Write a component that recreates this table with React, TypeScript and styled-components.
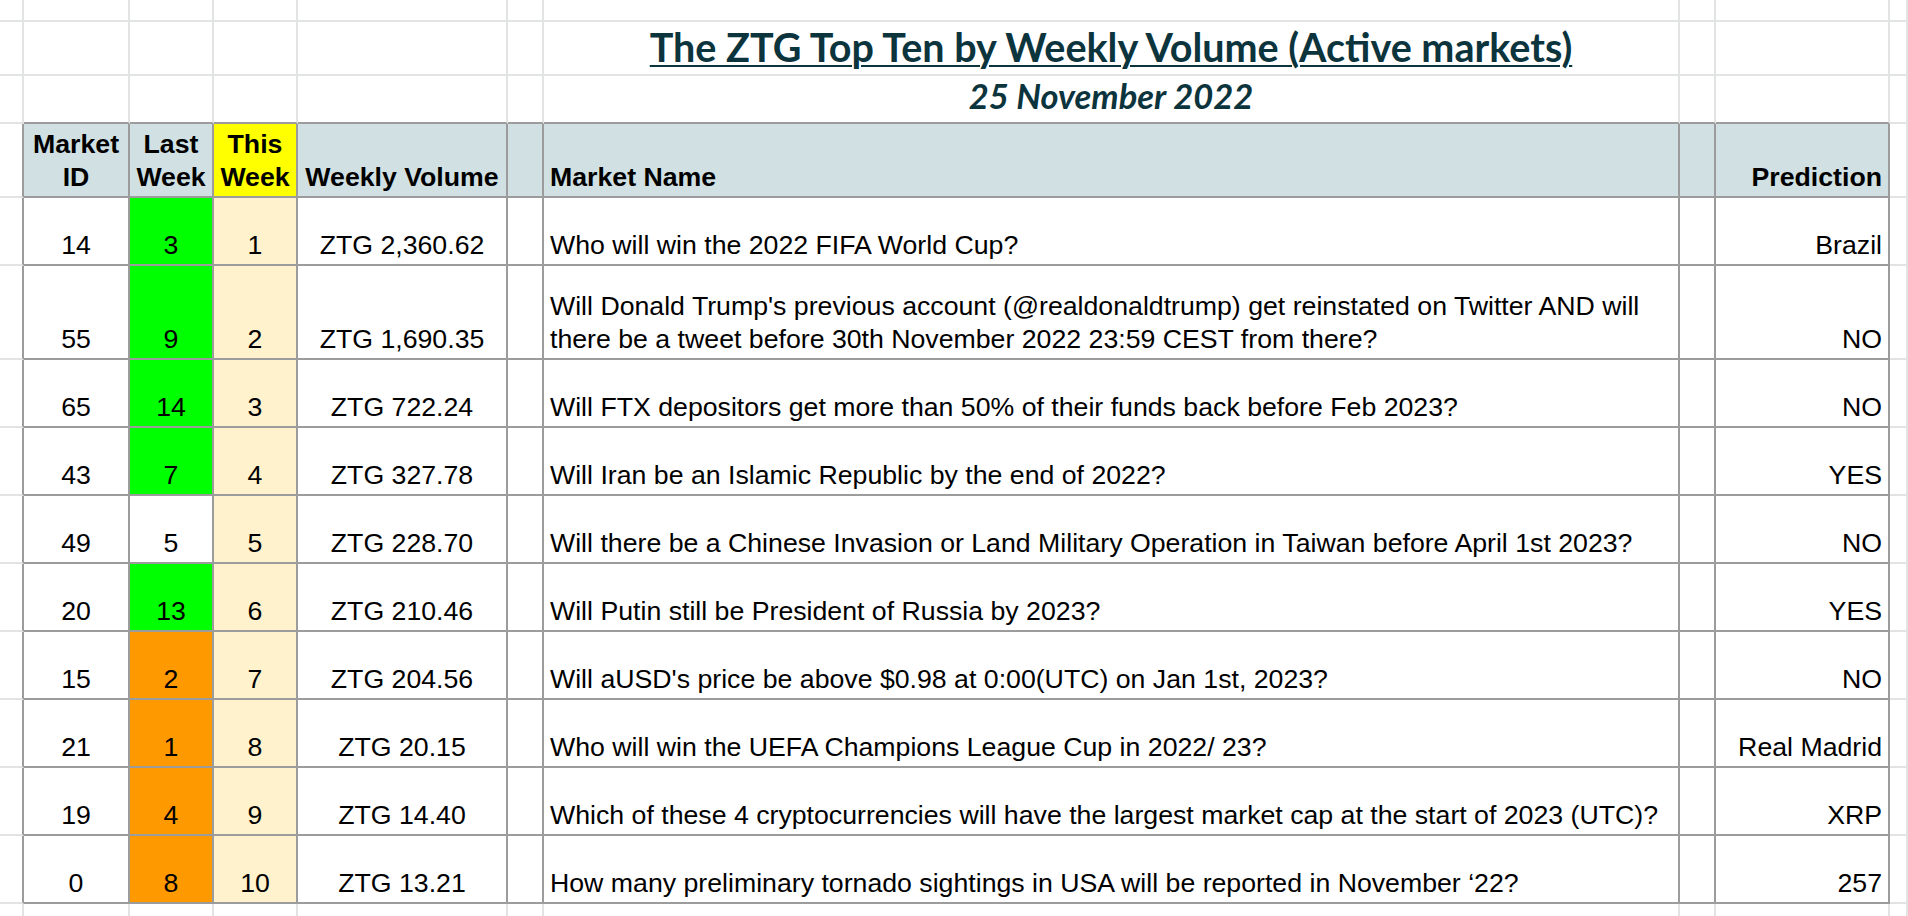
import * as React from 'react';
import styled, { createGlobalStyle } from 'styled-components';

type Tone = 'plain' | 'head' | 'yellow' | 'green' | 'orange' | 'peach';
type Align = 'left' | 'center' | 'right';

const GlobalStyle = createGlobalStyle`
  html, body {
    margin: 0;
    padding: 0;
    background: #ffffff;
  }
  body {
    font-family: 'Liberation Sans', Arial, sans-serif;
  }
`;

const COLUMNS = '24px 106px 84px 84px 210px 36px 1136px 36px 174px 1fr';
const GRID_LINE = '#e2e3e3';
const TABLE_LINE = '#9c9c9c';

const tones: Record<Tone, string> = {
  plain: '#ffffff',
  head: '#d0e0e3',
  yellow: '#ffff00',
  green: '#00ff00',
  orange: '#ff9900',
  peach: '#fff2cc',
};

const Sheet = styled.div`
  width: 1908px;
  height: 916px;
  overflow: hidden;
  background: #ffffff;
`;

const SheetRow = styled.div<{ $h: number }>`
  display: grid;
  grid-template-columns: ${COLUMNS};
  height: ${(p) => p.$h}px;
`;

const Cell = styled.div<{
  $tone?: Tone;
  $align?: Align;
  $darkRight?: boolean;
  $darkBottom?: boolean;
  $bold?: boolean;
}>`
  box-sizing: border-box;
  min-width: 0;
  display: flex;
  align-items: flex-end;
  justify-content: ${(p) =>
    p.$align === 'center' ? 'center' : p.$align === 'right' ? 'flex-end' : 'flex-start'};
  padding: 0 6px 2px 6px;
  background: ${(p) => tones[p.$tone || 'plain']};
  border-right: 2px solid ${(p) => (p.$darkRight ? TABLE_LINE : GRID_LINE)};
  border-bottom: 2px solid ${(p) => (p.$darkBottom ? TABLE_LINE : GRID_LINE)};
  font-size: 26.7px;
  line-height: 33px;
  font-weight: ${(p) => (p.$bold ? 700 : 400)};
  color: #000000;
  text-align: ${(p) => p.$align || 'left'};
`;

const Title = styled.span`
  font-family: Lato, 'Open Sans', sans-serif;
  font-size: 39.5px;
  line-height: 46px;
  font-weight: 700;
  color: #0c343d;
  text-decoration: underline;
  text-decoration-thickness: 2px;
  text-underline-offset: 3px;
  padding-bottom: 2px;
  white-space: nowrap;
`;

const DateLine = styled.span`
  font-family: Lato, 'Open Sans', sans-serif;
  font-size: 34.5px;
  line-height: 40px;
  font-weight: 700;
  font-style: italic;
  color: #0c343d;
  padding-bottom: 4px;
  white-space: nowrap;
`;

interface Market {
  id: number;
  last: number;
  lastTone: Tone;
  rank: number;
  volume: string;
  name: string;
  prediction: string;
}

const markets: Market[] = [
  { id: 14, last: 3, lastTone: 'green', rank: 1, volume: 'ZTG 2,360.62', name: 'Who will win the 2022 FIFA World Cup?', prediction: 'Brazil' },
  {
    id: 55,
    last: 9,
    lastTone: 'green',
    rank: 2,
    volume: 'ZTG 1,690.35',
    name: "Will Donald Trump's previous account (@realdonaldtrump) get reinstated on Twitter AND will there be a tweet before 30th November 2022 23:59 CEST from there?",
    prediction: 'NO',
  },
  { id: 65, last: 14, lastTone: 'green', rank: 3, volume: 'ZTG 722.24', name: 'Will FTX depositors get more than 50% of their funds back before Feb 2023?', prediction: 'NO' },
  { id: 43, last: 7, lastTone: 'green', rank: 4, volume: 'ZTG 327.78', name: 'Will Iran be an Islamic Republic by the end of 2022?', prediction: 'YES' },
  { id: 49, last: 5, lastTone: 'plain', rank: 5, volume: 'ZTG 228.70', name: 'Will there be a Chinese Invasion or Land Military Operation in Taiwan before April 1st 2023?', prediction: 'NO' },
  { id: 20, last: 13, lastTone: 'green', rank: 6, volume: 'ZTG 210.46', name: 'Will Putin still be President of Russia by 2023?', prediction: 'YES' },
  { id: 15, last: 2, lastTone: 'orange', rank: 7, volume: 'ZTG 204.56', name: "Will aUSD's price be above $0.98 at 0:00(UTC) on Jan 1st, 2023?", prediction: 'NO' },
  { id: 21, last: 1, lastTone: 'orange', rank: 8, volume: 'ZTG 20.15', name: 'Who will win the UEFA Champions League Cup in 2022/ 23?', prediction: 'Real Madrid' },
  { id: 19, last: 4, lastTone: 'orange', rank: 9, volume: 'ZTG 14.40', name: 'Which of these 4 cryptocurrencies will have the largest market cap at the start of 2023 (UTC)?', prediction: 'XRP' },
  { id: 0, last: 8, lastTone: 'orange', rank: 10, volume: 'ZTG 13.21', name: 'How many preliminary tornado sightings in USA will be reported in November \u201822?', prediction: '257' },
];

// plain sheet row; `edge` darkens the bottom line above the table
const BlankRow = ({ h, edge, children }: { h: number; edge?: boolean; children?: React.ReactNode }) => (
  <SheetRow $h={h}>
    <Cell />
    <Cell $darkBottom={edge} />
    <Cell $darkBottom={edge} />
    <Cell $darkBottom={edge} />
    <Cell $darkBottom={edge} />
    <Cell $darkBottom={edge} />
    <Cell $darkBottom={edge} $align="center">
      {children}
    </Cell>
    <Cell $darkBottom={edge} />
    <Cell $darkBottom={edge} />
    <Cell />
  </SheetRow>
);

const App = () => (
  <>
    <GlobalStyle />
    <Sheet>
      <BlankRow h={22} />
      <BlankRow h={54}>
        <Title>The ZTG Top Ten by Weekly Volume (Active markets)</Title>
      </BlankRow>
      <BlankRow h={48} edge>
        <DateLine>25 November 2022</DateLine>
      </BlankRow>

      <SheetRow $h={74}>
        <Cell $darkRight />
        <Cell $tone="head" $align="center" $bold $darkRight $darkBottom>
          Market
          <br />
          ID
        </Cell>
        <Cell $tone="head" $align="center" $bold $darkRight $darkBottom>
          Last
          <br />
          Week
        </Cell>
        <Cell $tone="yellow" $align="center" $bold $darkRight $darkBottom>
          This
          <br />
          Week
        </Cell>
        <Cell $tone="head" $align="center" $bold $darkRight $darkBottom>
          Weekly Volume
        </Cell>
        <Cell $tone="head" $darkRight $darkBottom />
        <Cell $tone="head" $bold $darkRight $darkBottom>
          Market Name
        </Cell>
        <Cell $tone="head" $darkRight $darkBottom />
        <Cell $tone="head" $align="right" $bold $darkRight $darkBottom>
          Prediction
        </Cell>
        <Cell />
      </SheetRow>

      {markets.map((m) => (
        <SheetRow key={m.rank} $h={m.rank === 2 ? 94 : 68}>
          <Cell $darkRight />
          <Cell $align="center" $darkRight $darkBottom>
            {m.id}
          </Cell>
          <Cell $tone={m.lastTone} $align="center" $darkRight $darkBottom>
            {m.last}
          </Cell>
          <Cell $tone="peach" $align="center" $darkRight $darkBottom>
            {m.rank}
          </Cell>
          <Cell $align="center" $darkRight $darkBottom>
            {m.volume}
          </Cell>
          <Cell $darkRight $darkBottom />
          <Cell $darkRight $darkBottom>
            {m.name}
          </Cell>
          <Cell $darkRight $darkBottom />
          <Cell $align="right" $darkRight $darkBottom>
            {m.prediction}
          </Cell>
          <Cell />
        </SheetRow>
      ))}

      <BlankRow h={40} />
    </Sheet>
  </>
);

export default App;
